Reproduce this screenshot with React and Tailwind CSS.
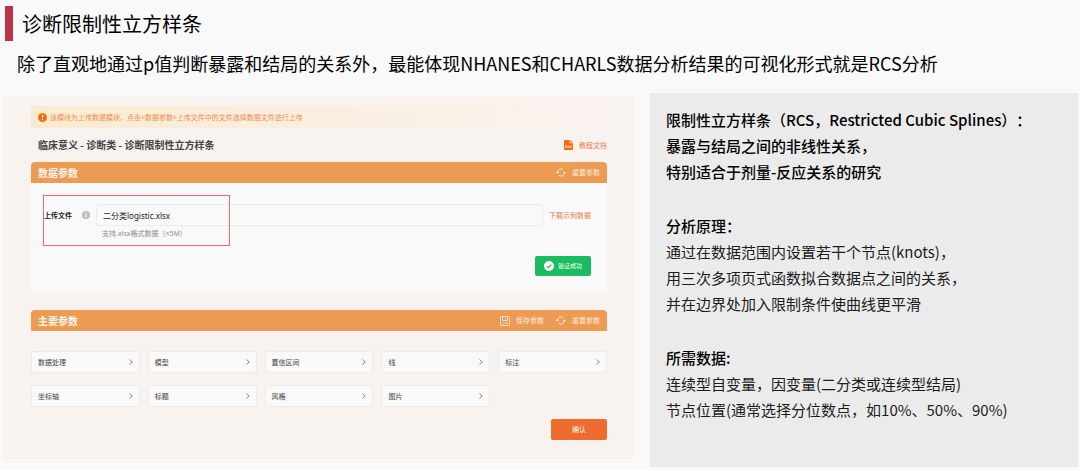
const MODULES = ['数据处理', '模型', '置信区间', '线', '标注', '坐标轴', '标题', '风格', '图片']

const NOTES = [
  {
    lead: ['限制性立方样条（RCS，Restricted Cubic Splines）：', '暴露与结局之间的非线性关系，', '特别适合于剂量-反应关系的研究'],
    lines: [],
  },
  {
    lead: ['分析原理：'],
    lines: ['通过在数据范围内设置若干个节点(knots)，', '用三次多项页式函数拟合数据点之间的关系，', '并在边界处加入限制条件使曲线更平滑'],
  },
  {
    lead: ['所需数据:'],
    lines: ['连续型自变量，因变量(二分类或连续型结局)', '节点位置(通常选择分位数点，如10%、50%、90%)'],
  },
]

function AlertIcon() {
  return (
    <svg viewBox="0 0 16 16" className="w-[9px] h-[9px] shrink-0" aria-hidden="true">
      <circle cx="8" cy="8" r="8" fill="#f96b10" />
      <path d="M6.800 3h2.400l-.5 6.400H7.300z" fill="#fff" />
      <circle cx="8" cy="12" r="1.200" fill="#fff" />
    </svg>
  )
}

function InfoIcon() {
  return (
    <svg viewBox="0 0 16 16" className="w-2 h-2 shrink-0" aria-hidden="true">
      <circle cx="8" cy="8" r="8" fill="#bcbcbc" />
      <circle cx="8" cy="4" r="1.300" fill="#fff" />
      <path d="M6 6.500h3v5h1.200v1.200H5.800v-1.200H7V7.700H6z" fill="#fff" />
    </svg>
  )
}

function PdfIcon() {
  return (
    <svg viewBox="0 0 18 20" className="w-[9px] h-[10px] shrink-0" aria-hidden="true">
      <path d="M1.500 0H11v6.500h7v12a1.500 1.500 0 0 1-1.500 1.500h-15A1.500 1.500 0 0 1 0 18.500V1.500A1.500 1.500 0 0 1 1.500 0z" fill="#f96b10" />
      <path d="M12.500 0L18 5.200h-5.500z" fill="#f96b10" />
      <path d="M3 16v-4.500h1.800q1.200 0 1.200 1.400t-1.200 1.400H3M8 11.500V16h1q1.700 0 1.700-2.200T9 11.500zM13 16v-4.500h2.800M13 13.800h2.300" fill="none" stroke="#fff" strokeWidth="1.100" />
    </svg>
  )
}

function ResetIcon() {
  return (
    <svg viewBox="0 0 20 18" className="w-[10px] h-[9px] shrink-0" fill="none" stroke="#fdebd8" strokeWidth="1.800" aria-hidden="true">
      <path d="M3 10A7 7 0 0 1 14.500 3.600" />
      <path d="M17 8A7 7 0 0 1 5.500 14.400" />
      <path d="M.6 7.800L3 10.300 5.600 8M14.400 10L17 7.700l2.400 2.500" />
    </svg>
  )
}

function SaveIcon() {
  return (
    <svg viewBox="0 0 20 20" className="w-[10px] h-[10px] shrink-0" fill="none" stroke="#fdebd8" strokeWidth="1.600" aria-hidden="true">
      <rect x="1" y="1" width="18" height="18" rx="1.500" />
      <path d="M5 1v8h10V1M11.500 3.500v3M4.500 14.500h11" />
    </svg>
  )
}

function CheckIcon() {
  return (
    <svg viewBox="0 0 20 20" className="w-[10px] h-[10px] shrink-0" aria-hidden="true">
      <circle cx="10" cy="10" r="10" fill="#fff" />
      <path d="M5.500 10.300l3.200 3.200 6-6" fill="none" stroke="#1abc62" strokeWidth="2.400" />
    </svg>
  )
}

function Chevron() {
  return (
    <svg viewBox="0 0 8 12" className="w-1 h-[6px] shrink-0" fill="none" stroke="#666" strokeWidth="1.600" aria-hidden="true">
      <path d="M1 1l5.500 5L1 11" />
    </svg>
  )
}

function SectionBar({ title, children }) {
  return (
    <div className="flex items-center justify-between h-[21px] px-[7px] rounded-t-[4px] bg-[#ec9b55]">
      <h3 className="text-[10px] leading-none font-bold text-[#fdf3ea]">{title}</h3>
      <div className="flex items-center gap-3 text-[7px] leading-none text-[#fdebd8]">{children}</div>
    </div>
  )
}

function BarButton({ icon, label }) {
  return (
    <button type="button" className="flex items-center gap-[6px]">
      {icon}
      {label}
    </button>
  )
}

export default function App() {
  return (
    <div className="min-h-screen bg-[#f9f9f9] pl-[3px] pr-[2px] pt-[6px] pb-[3px] font-['Noto_Sans_CJK_SC',sans-serif] text-[#111]">

      {/* HEADING */}
      <header>
        <div className="flex items-center h-[35px] ml-[2px] border-l-8 border-[#b93549] pl-[9px]">
          <h1 className="text-[20px] leading-none text-black">诊断限制性立方样条</h1>
        </div>
        <p className="mt-2 ml-[14px] text-[18px] leading-7 text-black">
          除了直观地通过p值判断暴露和结局的关系外，最能体现NHANES和CHARLS数据分析结果的可视化形式就是RCS分析
        </p>
      </header>

      <div className="mt-4 grid grid-cols-[631fr_428fr] gap-4 items-start">

        {/* TOOL PANEL */}
        <main className="mt-[3px] bg-[#f9f3f0] pl-7 pr-[27px] pt-[10px] pb-[19px]">
          <div className="flex items-center gap-[3px] h-[22px] px-[7px] bg-gradient-to-r from-[#faebd0] to-[#f9f3f0] text-[7px] leading-none text-[#f58a4c]">
            <AlertIcon />
            <p>该模块为上传数据模块，点击&lt;数据参数&gt;上传文件中的文件选择数据文件进行上传</p>
          </div>

          <div className="flex items-center justify-between h-[34px] pl-[7px]">
            <h2 className="text-[10px] leading-none font-bold text-[#444]">临床意义 - 诊断类 - 诊断限制性立方样条</h2>
            <a href="#doc" className="flex items-center gap-[6px] text-[7px] leading-none text-[#f0794f]">
              <PdfIcon />
              教程文档
            </a>
          </div>

          {/* DATA */}
          <section className="bg-[#f9f9f9]">
            <SectionBar title="数据参数">
              <BarButton icon={<ResetIcon />} label="重置参数" />
            </SectionBar>
            <div className="relative pl-[13px] pr-4 pt-[21px] pb-4">
              <div className="absolute left-3 top-3 w-[187px] h-[51px] border border-red-400 pointer-events-none" />
              <div className="flex items-center">
                <label htmlFor="file" className="w-[38px] text-[7px] leading-none font-bold text-[#222]">上传文件</label>
                <InfoIcon />
                <input
                  id="file"
                  type="text"
                  readOnly
                  value="二分类logistic.xlsx"
                  className="ml-[6px] flex-1 min-w-0 h-[22px] px-[6px] border border-[#ececec] rounded-[2px] bg-transparent text-[8px] text-[#222] font-['Noto_Sans','Noto_Sans_CJK_SC',sans-serif]"
                />
                <a href="#sample" className="ml-[6px] text-[7px] leading-none text-[#f0794f]">下载示例数据</a>
              </div>
              <p className="mt-1 ml-[58px] text-[7px] leading-2 text-[#8c8c8c] font-['Noto_Sans','Noto_Sans_CJK_SC',sans-serif]">支持.xlsx格式数据（&lt;5M）</p>
              <div className="mt-[18px] flex justify-end">
                <button type="button" className="flex items-center gap-1 h-5 w-14 justify-center rounded-[2px] bg-[#1abc62] text-[6px] leading-none text-white">
                  <CheckIcon />
                  验证成功
                </button>
              </div>
            </div>
          </section>

          {/* MAIN PARAMETERS */}
          <section className="mt-[18px]">
            <SectionBar title="主要参数">
              <BarButton icon={<SaveIcon />} label="保存参数" />
              <BarButton icon={<ResetIcon />} label="重置参数" />
            </SectionBar>
            <div className="mt-5 grid grid-cols-5 gap-x-2 gap-y-3">
              {MODULES.map(name => (
                <button
                  key={name}
                  type="button"
                  className="flex items-center justify-between h-[22px] px-[6px] border border-[#ebebeb] rounded-[2px] bg-[#f9f9f9] text-[7px] leading-none text-[#444]"
                >
                  {name}
                  <Chevron />
                </button>
              ))}
            </div>
            <div className="mt-3 flex justify-end">
              <button type="button" className="w-14 h-[21px] rounded-[2px] bg-[#ee6c2d] text-[7px] leading-none text-white">确认</button>
            </div>
          </section>
        </main>

        {/* NOTES */}
        <aside className="flex flex-col gap-7 min-h-[374px] bg-[#ebebeb] px-4 pt-[14px] text-[15px] leading-[26px] text-[#1c1c1c] [text-spacing-trim:space-all]">
          {NOTES.map(note => (
            <section key={note.lead[0]}>
              {note.lead.map(line => (
                <p key={line} className="font-medium text-black">{line}</p>
              ))}
              {note.lines.map(line => (
                <p key={line}>{line}</p>
              ))}
            </section>
          ))}
        </aside>
      </div>
    </div>
  )
}
